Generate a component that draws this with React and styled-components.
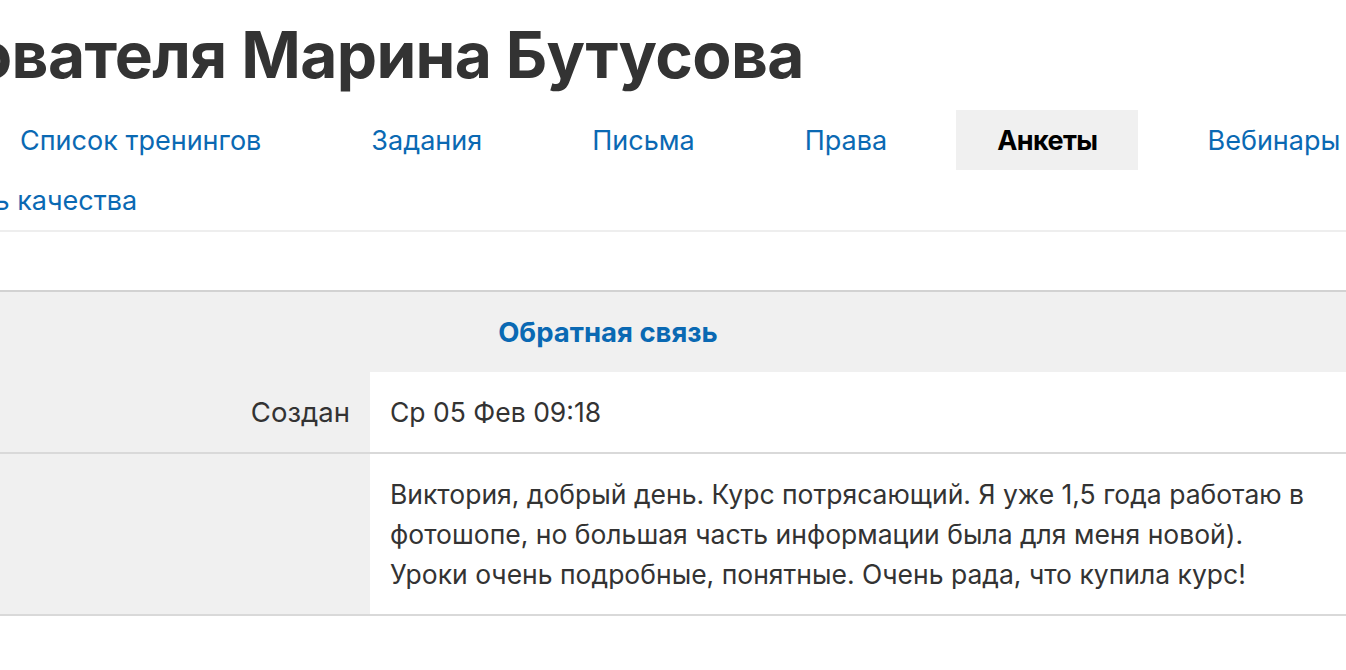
import React from "react";
import styled, { createGlobalStyle } from "styled-components";

const GlobalStyle = createGlobalStyle`
  html, body {
    margin: 0;
    padding: 0;
    background: #fff;
    overflow: hidden;
  }
  body {
    font-family: Inter, "Noto Sans", "Liberation Sans", sans-serif;
    color: #333;
  }
`;

const Page = styled.div`
  width: 1346px;
  height: 670px;
  overflow: hidden;
`;

const Title = styled.h1`
  margin: 0 0 0 -27px;
  font-size: 64px;
  line-height: 110px;
  font-weight: 700;
  color: #333;
  white-space: nowrap;
  letter-spacing: -0.01em;
`;

const Nav = styled.ul`
  display: flex;
  flex-wrap: wrap;
  column-gap: 28px;
  list-style: none;
  margin: 0 0 0 -21px;
  padding: 0;
  width: 1500px;
  border-bottom: 2px solid #eee;
`;

const NavItem = styled.li`
  display: flex;
  align-items: center;
  height: 60px;
  padding: 0 41px;
  margin-left: ${({ $shift }) => $shift || 0}px;
  font-size: 27px;
  white-space: nowrap;
  background: ${({ $active }) => ($active ? "#f0f0f0" : "transparent")};
  color: ${({ $active }) => ($active ? "#000" : "#0a69b3")};
  font-weight: ${({ $active }) => ($active ? 700 : 400)};
  letter-spacing: ${({ $active }) => ($active ? "-0.6px" : "0")};
`;

const Table = styled.table`
  margin: 58px 0 0 -130px;
  width: 1476px;
  border-collapse: collapse;
  border-top: 2px solid #d2d2d2;
  font-size: 26.5px;
  line-height: 40px;
`;

const HeadCell = styled.th`
  background: #f0f0f0;
  color: #0a69b3;
  font-size: 27.5px;
  font-weight: 700;
  text-align: center;
  padding: 20px;
`;

const Row = styled.tr`
  border-bottom: 2px solid #d9d9d9;
`;

const LabelCell = styled.td`
  width: 460px;
  background: #f0f0f0;
  text-align: right;
  vertical-align: top;
  padding: 20px;
  color: #333;
  font-size: 27.5px;
`;

const ValueCell = styled.td`
  background: #fff;
  vertical-align: top;
  padding: 20px 40px 20px 20px;
  color: #333;
`;

const navItems = [
  { label: "Список тренингов" },
  { label: "Задания" },
  { label: "Письма" },
  { label: "Права" },
  { label: "Анкеты", active: true },
  { label: "Вебинары" },
  { label: "Контроль качества", shift: -136 },
];

const rows = [
  { label: "Создан", value: "Ср 05 Фев 09:18" },
  {
    label: "",
    value:
      "Виктория, добрый день. Курс потрясающий. Я уже 1,5 года работаю в фотошопе, но большая часть информации была для меня новой). Уроки очень подробные, понятные. Очень рада, что купила курс!",
  },
];

export default function App() {
  return (
    <Page>
      <GlobalStyle />
      <Title>ователя Марина Бутусова</Title>
      <Nav>
        {navItems.map((item) => (
          <NavItem key={item.label} $active={item.active} $shift={item.shift}>
            {item.label}
          </NavItem>
        ))}
      </Nav>
      <Table>
        <thead>
          <tr>
            <HeadCell colSpan={2}>Обратная связь</HeadCell>
          </tr>
        </thead>
        <tbody>
          {rows.map((row, i) => (
            <Row key={i}>
              <LabelCell>{row.label}</LabelCell>
              <ValueCell>{row.value}</ValueCell>
            </Row>
          ))}
        </tbody>
      </Table>
    </Page>
  );
}
